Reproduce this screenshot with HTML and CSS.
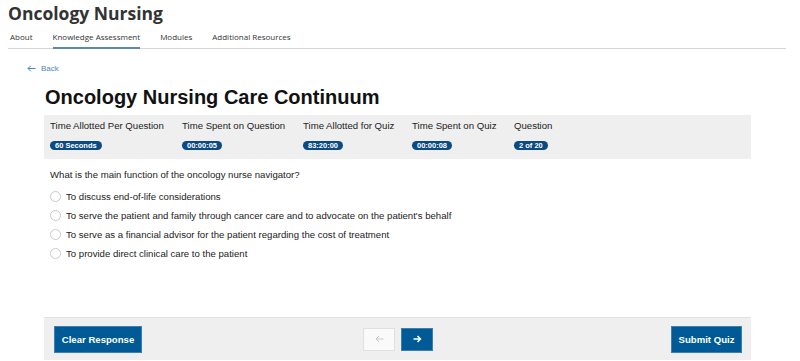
FILE: index.html
```html
<!DOCTYPE html>
<html>
<head>
<meta charset="utf-8">
<link rel="stylesheet" href="styles.css">
</head>
<body>
<header class="site-header">
  <h1 class="site-title">Oncology Nursing</h1>
  <nav class="tabs">
    <a class="tab">About</a>
    <a class="tab active">Knowledge Assessment</a>
    <a class="tab">Modules</a>
    <a class="tab">Additional Resources</a>
  </nav>
</header>
<div class="back-row">
  <a class="back"><svg width="9" height="7" viewBox="0 0 9 7"><path d="M8.5 3.5H1M3.8 0.7L1 3.5l2.8 2.8" fill="none" stroke="#4a86c8" stroke-width="1"/></svg>Back</a>
</div>
<main class="quiz">
  <h2 class="quiz-title">Oncology Nursing Care Continuum</h2>
  <section class="stats">
    <div class="stat s1"><div class="label">Time Allotted Per Question</div><span class="badge">60 Seconds</span></div>
    <div class="stat s2"><div class="label">Time Spent on Question</div><span class="badge">00:00:05</span></div>
    <div class="stat s3"><div class="label">Time Allotted for Quiz</div><span class="badge">83:20:00</span></div>
    <div class="stat s4"><div class="label">Time Spent on Quiz</div><span class="badge">00:00:08</span></div>
    <div class="stat s5"><div class="label">Question</div><span class="badge">2 of 20</span></div>
  </section>
  <section class="question">
    <p class="prompt">What is the main function of the oncology nurse navigator?</p>
    <label class="option"><span class="radio"></span>To discuss end-of-life considerations</label>
    <label class="option"><span class="radio"></span>To serve the patient and family through cancer care and to advocate on the patient's behalf</label>
    <label class="option"><span class="radio"></span>To serve as a financial advisor for the patient regarding the cost of treatment</label>
    <label class="option"><span class="radio"></span>To provide direct clinical care to the patient</label>
  </section>
  <footer class="actions">
    <button class="btn clear">Clear Response</button>
    <div class="pager">
      <button class="nav-btn prev"><svg width="9" height="8" viewBox="0 0 9 8"><path d="M8.5 4H1M4 1L1 4l3 3" fill="none" stroke="#c8c8c8" stroke-width="1"/></svg></button>
      <button class="nav-btn next"><svg width="9" height="8" viewBox="0 0 9 8"><path d="M0.5 4H7.5M4.5 1l3 3-3 3" fill="none" stroke="#fff" stroke-width="1.5"/></svg></button>
    </div>
    <button class="btn submit">Submit Quiz</button>
  </footer>
</main>
</body>
</html>
```
FILE: styles.css
```css
* { box-sizing: border-box; }
body {
  margin: 0;
  background: #fff;
  font-family: "Liberation Sans", Arial, sans-serif;
  color: #222;
}
.site-header {
  padding: 0 14px 0 8px;
}
.site-title {
  margin: 0;
  padding-top: 1px;
  height: 27px;
  font-family: "Open Sans", sans-serif;
  font-weight: 700;
  font-size: 17.5px;
  line-height: 24px;
  color: #333;
}
.tabs {
  display: flex;
  border-bottom: 1px solid #d6d6d6;
  height: 22px;
  padding-left: 2px;
}
.tab {
  font-family: "Open Sans", sans-serif;
  font-size: 8px;
  color: #333;
  line-height: 20px;
  margin-right: 20px;
  height: 22px;
}
.tab.active {
  border-bottom: 2px solid #5b88ad;
}
.back-row {
  padding: 9px 0 0 27px;
  height: 36px;
}
.back {
  display: inline-flex;
  align-items: center;
  gap: 5px;
  font-size: 8px;
  color: #4a86c8;
}
.quiz {
  width: 707px;
  margin-left: 44px;
}
.quiz-title {
  margin: 0;
  font-size: 20px;
  font-weight: 700;
  color: #111;
  height: 30px;
  line-height: 24px;
  padding-left: 1px;
}
.stats {
  display: flex;
  background: #efefef;
  height: 44px;
  padding: 5px 0 0 6px;
}
.stat { display: flex; flex-direction: column; align-items: flex-start; }
.s1 { width: 132px; }
.s2 { width: 121px; }
.s3 { width: 109px; }
.s4 { width: 102px; }
.label {
  font-size: 9.6px;
  color: #222;
  line-height: 12px;
  height: 21px;
}
.badge {
  display: inline-block;
  background: #0b4a82;
  color: #fff;
  font-weight: 700;
  font-size: 7.5px;
  line-height: 9px;
  height: 9px;
  padding: 0 5px;
  border-radius: 5px;
}
.question {
  padding: 10px 0 0 6px;
  height: 158px;
}
.prompt {
  margin: 0 0 6px;
  font-size: 9.6px;
  line-height: 12px;
  color: #222;
}
.option {
  display: flex;
  align-items: center;
  gap: 5px;
  font-size: 9.6px;
  color: #222;
  height: 19px;
}
.radio {
  width: 11px;
  height: 11px;
  border: 1px solid #c9c9c9;
  border-radius: 50%;
  background: #fff;
}
.actions {
  display: flex;
  align-items: center;
  background: #efefef;
  border-top: 1px solid #e2e2e2;
  height: 43px;
  padding: 0 9px 0 10px;
}
.btn {
  background: #005a96;
  color: #fff;
  border: 1px solid #3c7fb0;
  font-family: "Liberation Sans", Arial, sans-serif;
  font-weight: 700;
  font-size: 9.6px;
  height: 27px;
  padding: 0 4px;
}
.clear { width: 88px; }
.submit { width: 71px; margin-left: auto; }
.pager {
  display: flex;
  gap: 6px;
  margin-left: 221px;
}
.nav-btn {
  width: 32px;
  height: 23px;
  display: flex;
  align-items: center;
  justify-content: center;
  padding: 0;
}
.prev { background: #fafafa; border: 1px solid #e0e0e0; }
.next { background: #005a96; border: 1px solid #3c7fb0; }
```
